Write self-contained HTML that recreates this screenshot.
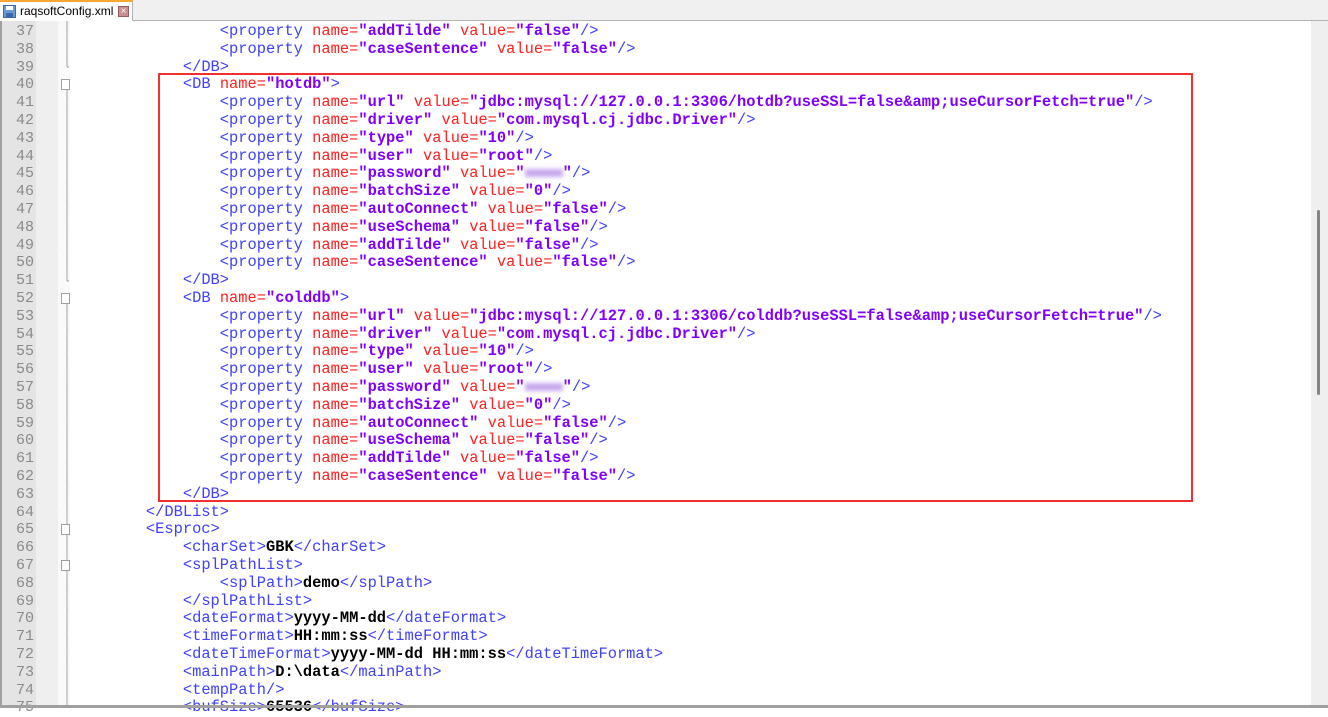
<!DOCTYPE html>
<html><head><meta charset="utf-8"><style>
body{margin:0;width:1328px;height:708px;overflow:hidden;background:#fff;position:relative;font-family:"Liberation Mono",monospace}
#tabbar{position:absolute;left:0;top:0;width:1328px;height:20px;background:#f0f0f0;border-bottom:1px solid #b4b4b4}
#tab{position:absolute;left:0;top:0;width:133px;height:21px;background:#fff;border-top:2px solid #f8a830;box-sizing:border-box;border-right:1px solid #b4b4b4;font:12px "Liberation Sans",sans-serif;color:#000}
#gut{position:absolute;left:0;top:21px;width:36px;height:685px;background:#e4e4e4;border-left:2px solid #a0a0a0;box-sizing:border-box}
#gut2{position:absolute;left:36px;top:21px;width:22px;height:685px;background:#efefef}
#fold{position:absolute;left:58px;top:21px;width:12px;height:685px;background-image:repeating-linear-gradient(45deg,#f4f4f4 0 1px,#fff 1px 2px)}
.ln{position:absolute;left:0;width:34px;text-align:right;color:#8a8a8a;font-size:15px;line-height:17.8px}
.c{position:absolute;left:72px;white-space:pre;font-size:15.4px;line-height:17.8px;color:#000}
.t{color:#4040ff}.a{color:#ff2020}.v{color:#8000ff;font-weight:bold}.b{font-weight:bold}
#box{position:absolute;left:158px;top:73px;width:1035px;height:429px;border:2px solid #f03030;box-sizing:border-box}
#sb{position:absolute;left:1311px;top:21px;width:17px;height:685px;background:#efefef}
#thumb{position:absolute;left:1317px;top:210px;width:3px;height:185px;background:#858585;border-radius:2px}
#bot{position:absolute;left:0;top:705px;width:1328px;height:3px;background:#a0a0a0}
.blur{display:inline-block;width:38px;height:8px;background:#c8a8ee;filter:blur(2px);vertical-align:middle}
</style></head><body>
<div id="tabbar"><div id="tab"><svg style="position:absolute;left:3px;top:3px" width="13" height="13"><rect x="0.5" y="0.5" width="12" height="12" fill="#6a9ad8" stroke="#3a6aa8"/><rect x="3" y="1" width="7" height="4" fill="#fff"/><rect x="3" y="8" width="7" height="4" fill="#3a6aa8"/></svg><span style="position:absolute;left:20px;top:2px">raqsoftConfig.xml</span><span style="position:absolute;left:118px;top:4px;width:11px;height:11px;background:#c89090;border:1px solid #906060;box-sizing:border-box;color:#fff;font-size:10px;line-height:9px;text-align:center">×</span></div></div>
<div id="gut"></div><div id="gut2"></div><div id="fold"></div>
<svg style="position:absolute;left:58px;top:21px" width="12" height="685">
<g stroke="#a0a0a0" fill="#fff">
<line x1="9" y1="0" x2="9" y2="46"/><line x1="9" y1="46" x2="11" y2="46"/>
<rect x="3.5" y="58.5" width="8" height="10"/><line x1="9" y1="69" x2="9" y2="260"/><line x1="9" y1="260" x2="11" y2="260"/>
<rect x="3.5" y="272.5" width="8" height="10"/><line x1="9" y1="283" x2="9" y2="685"/>
<rect x="3.5" y="503.5" width="8" height="10"/><rect x="3.5" y="539.5" width="8" height="10"/>
</g></svg>
<div id="lines"></div>
<div id="box"></div>
<div id="sb"></div><div id="thumb"></div><div id="bot"></div>
<script>
function p(n,v,val){return '                <span class="t">&lt;property</span> <span class="a">name=</span><span class="v">"'+n+'"</span> <span class="a">value=</span><span class="v">"'+val+'"</span><span class="t">/&gt;</span>';}
function blk(name,db){return [
'            <span class="t">&lt;DB</span> <span class="a">name=</span><span class="v">"'+name+'"</span><span class="t">&gt;</span>',
p('url',0,'jdbc:mysql://127.0.0.1:3306/'+name+'?useSSL=false&amp;amp;useCursorFetch=true'),
p('driver',0,'com.mysql.cj.jdbc.Driver'),p('type',0,'10'),p('user',0,'root'),
'                <span class="t">&lt;property</span> <span class="a">name=</span><span class="v">"password"</span> <span class="a">value=</span><span class="v">"<span class="blur"></span>"</span><span class="t">/&gt;</span>',
p('batchSize',0,'0'),p('autoConnect',0,'false'),p('useSchema',0,'false'),p('addTilde',0,'false'),p('caseSentence',0,'false'),
'            <span class="t">&lt;/DB&gt;</span>'];}
function tg(ind,t,val){return ' '.repeat(ind)+'<span class="t">&lt;'+t+'&gt;</span><span class="b">'+val+'</span><span class="t">&lt;/'+t+'&gt;</span>';}
var L=[p('addTilde',0,'false'),p('caseSentence',0,'false'),'            <span class="t">&lt;/DB&gt;</span>'].concat(blk('hotdb'),blk('colddb'),[
'        <span class="t">&lt;/DBList&gt;</span>','        <span class="t">&lt;Esproc&gt;</span>',
tg(12,'charSet','GBK'),'            <span class="t">&lt;splPathList&gt;</span>',tg(16,'splPath','demo'),'            <span class="t">&lt;/splPathList&gt;</span>',
tg(12,'dateFormat','yyyy-MM-dd'),tg(12,'timeFormat','HH:mm:ss'),tg(12,'dateTimeFormat','yyyy-MM-dd HH:mm:ss'),tg(12,'mainPath','D:\\data'),
'            <span class="t">&lt;tempPath/&gt;</span>',tg(12,'bufSize','65536')]);
var h='';for(var i=0;i<L.length;i++){var y=23+i*17.8;h+='<div class="ln" style="top:'+y+'px">'+(37+i)+'</div><div class="c" style="top:'+y+'px">'+L[i]+'</div>';}
document.getElementById('lines').innerHTML=h;
</script>
</body></html>
